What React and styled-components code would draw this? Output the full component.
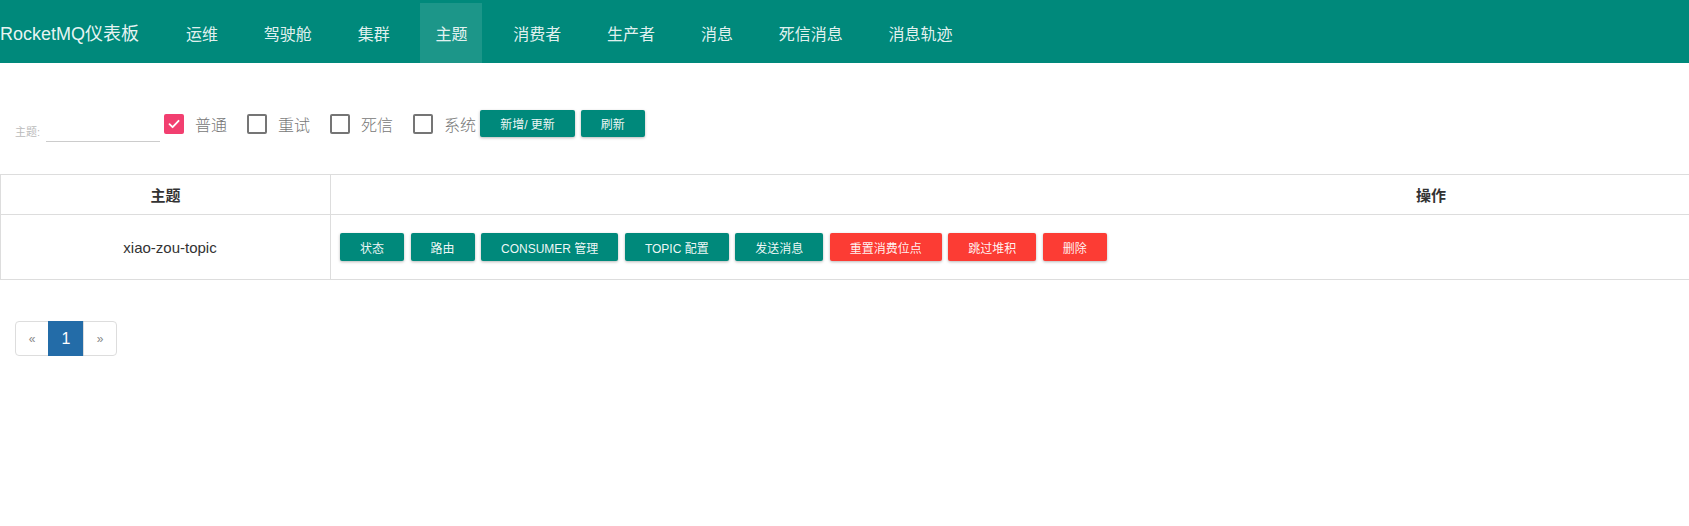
import React from "react";
import styled, { createGlobalStyle } from "styled-components";

const GlobalStyle = createGlobalStyle`
  html, body {
    margin: 0;
    padding: 0;
    background: #fff;
    overflow-x: hidden;
  }
  body {
    font-family: "Liberation Sans", "Noto Sans CJK SC", Arial, sans-serif;
    color: #333;
  }
  * { box-sizing: border-box; }
`;

const Navbar = styled.header`
  height: 63px;
  background: #00897b;
  display: flex;
  align-items: stretch;
`;

const Brand = styled.div`
  width: 171px;
  flex-shrink: 0;
  display: flex;
  align-items: center;
  font-size: 18px;
  color: rgba(255, 255, 255, 0.92);
  white-space: nowrap;
`;

const NavList = styled.nav`
  display: flex;
  gap: 15.8px;
`;

const NavItem = styled.a`
  margin-top: 3px;
  padding: 0 15px;
  display: flex;
  align-items: center;
  font-size: 16px;
  color: rgba(255, 255, 255, 0.9);
  white-space: nowrap;
  background: ${(p) => (p.$active ? "rgba(255,255,255,0.11)" : "transparent")};
  cursor: pointer;
`;

const FilterBar = styled.div`
  margin-top: 47px;
  height: 27px;
  padding-left: 15px;
  display: flex;
  align-items: center;
`;

const Field = styled.div`
  margin-top: 16px;
  display: flex;
  align-items: flex-end;
`;

const FieldLabel = styled.label`
  font-size: 11px;
  color: #bbb;
  line-height: 14px;
  padding-bottom: 3px;
`;

const FieldInput = styled.div`
  margin-left: 6px;
  width: 114px;
  height: 21px;
  border-bottom: 1px solid #ccc;
`;

const CheckGroup = styled.div`
  margin-left: 4px;
  display: flex;
  gap: 20px;
`;

const CheckOption = styled.label`
  display: flex;
  align-items: center;
  gap: 11px;
  font-size: 16px;
  color: #777;
  font-weight: 300;
  white-space: nowrap;
`;

const Box = styled.span`
  width: 20px;
  height: 20px;
  border-radius: 2px;
  display: flex;
  align-items: center;
  justify-content: center;
  background: ${(p) => (p.$checked ? "#f23f70" : "transparent")};
  border: ${(p) => (p.$checked ? "none" : "2px solid #757575")};
`;

const Button = styled.button`
  height: ${(p) => (p.$h || 27)}px;
  padding: 0 20px;
  border: none;
  border-radius: 2px;
  background: ${(p) => (p.$danger ? "#fc3c34" : "#00897b")};
  color: rgba(255, 255, 255, 0.95);
  font-family: "Liberation Sans", "Noto Sans CJK SC", Arial, sans-serif;
  font-size: 12px;
  text-transform: uppercase;
  white-space: nowrap;
  box-shadow: 0 1px 3px rgba(0, 0, 0, 0.28);
  cursor: pointer;
`;

const ButtonGroup = styled.div`
  display: flex;
  gap: ${(p) => p.$gap || 6}px;
  margin-left: ${(p) => p.$ml || 0}px;
`;

const TableWrap = styled.div`
  margin-top: 37px;
  width: 100%;
  overflow: hidden;
`;

const Table = styled.table`
  width: 2532px;
  border-collapse: collapse;
  border: 1px solid #ddd;
`;

const Th = styled.th`
  height: 40px;
  border: 1px solid #ddd;
  font-size: 15px;
  font-weight: 700;
  color: #333;
  text-align: center;
  padding: 0;
  width: ${(p) => (p.$w ? `${p.$w}px` : "auto")};
`;

const Td = styled.td`
  height: 65px;
  border: 1px solid #ddd;
  padding: 0 0 0 9px;
  font-size: 15px;
  font-weight: 300;
  color: #333;
  text-align: ${(p) => (p.$center ? "center" : "left")};
`;

const Pagination = styled.ul`
  list-style: none;
  margin: 41px 0 0 15px;
  padding: 0;
  display: flex;
`;

const PageItem = styled.li`
  width: ${(p) => p.$w}px;
  height: 35px;
  display: flex;
  align-items: center;
  justify-content: center;
  border: 1px solid ${(p) => (p.$active ? "#236ca8" : "#ddd")};
  margin-left: -1px;
  background: ${(p) => (p.$active ? "#236ca8" : "#fff")};
  color: ${(p) => (p.$active ? "#fff" : "#888")};
  font-size: ${(p) => (p.$active ? 16 : 12)}px;
  font-weight: 300;
  &:first-child {
    margin-left: 0;
    border-radius: 4px 0 0 4px;
  }
  &:last-child {
    border-radius: 0 4px 4px 0;
  }
`;

const navItems = ["运维", "驾驶舱", "集群", "主题", "消费者", "生产者", "消息", "死信消息", "消息轨迹"];
const checks = [
  { label: "普通", checked: true },
  { label: "重试" },
  { label: "死信" },
  { label: "系统" },
];
const actions = [
  { label: "状态" },
  { label: "路由" },
  { label: "CONSUMER 管理" },
  { label: "TOPIC 配置" },
  { label: "发送消息" },
  { label: "重置消费位点", danger: true },
  { label: "跳过堆积", danger: true },
  { label: "删除", danger: true },
];

function Check() {
  return (
    <svg width="14" height="14" viewBox="0 0 14 14">
      <path d="M2.5 7.2 L5.6 10.2 L11.6 3.8" fill="none" stroke="#fff" strokeWidth="1.8" strokeLinecap="round" strokeLinejoin="round" />
    </svg>
  );
}

export default function App() {
  return (
    <>
      <GlobalStyle />
      <Navbar>
        <Brand>RocketMQ仪表板</Brand>
        <NavList>
          {navItems.map((n) => (
            <NavItem key={n} $active={n === "主题"}>{n}</NavItem>
          ))}
        </NavList>
      </Navbar>

      <FilterBar>
        <Field>
          <FieldLabel>主题:</FieldLabel>
          <FieldInput />
        </Field>
        <CheckGroup>
          {checks.map((c) => (
            <CheckOption key={c.label}>
              <Box $checked={c.checked}>{c.checked && <Check />}</Box>
              {c.label}
            </CheckOption>
          ))}
        </CheckGroup>
        <ButtonGroup $ml={4}>
          <Button>新增/ 更新</Button>
          <Button>刷新</Button>
        </ButtonGroup>
      </FilterBar>

      <TableWrap>
        <Table>
          <thead>
            <tr>
              <Th $w={330}>主题</Th>
              <Th>操作</Th>
            </tr>
          </thead>
          <tbody>
            <tr>
              <Td $center>xiao-zou-topic</Td>
              <Td>
                <ButtonGroup $gap={6.5}>
                  {actions.map((a) => (
                    <Button key={a.label} $h={28} $danger={a.danger}>{a.label}</Button>
                  ))}
                </ButtonGroup>
              </Td>
            </tr>
          </tbody>
        </Table>
      </TableWrap>

      <Pagination>
        <PageItem $w={34}>«</PageItem>
        <PageItem $w={36} $active>1</PageItem>
        <PageItem $w={34}>»</PageItem>
      </Pagination>
    </>
  );
}
